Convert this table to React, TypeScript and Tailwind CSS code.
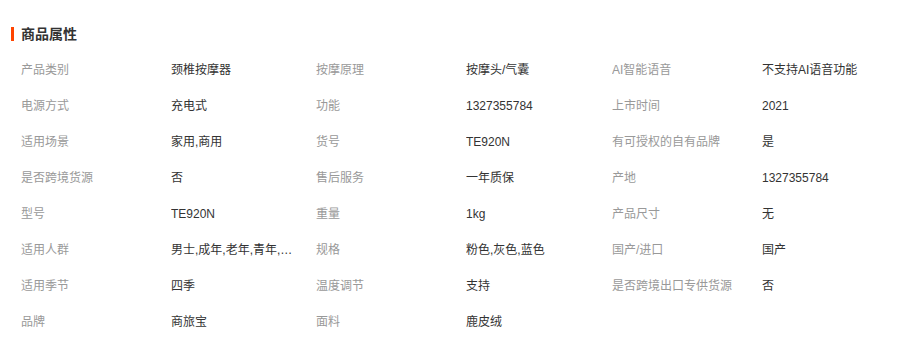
const attrs: [string, string][] = [
  ['产品类别', '颈椎按摩器'],
  ['按摩原理', '按摩头/气囊'],
  ['AI智能语音', '不支持AI语音功能'],
  ['电源方式', '充电式'],
  ['功能', '1327355784'],
  ['上市时间', '2021'],
  ['适用场景', '家用,商用'],
  ['货号', 'TE920N'],
  ['有可授权的自有品牌', '是'],
  ['是否跨境货源', '否'],
  ['售后服务', '一年质保'],
  ['产地', '1327355784'],
  ['型号', 'TE920N'],
  ['重量', '1kg'],
  ['产品尺寸', '无'],
  ['适用人群', '男士,成年,老年,青年,中年'],
  ['规格', '粉色,灰色,蓝色'],
  ['国产/进口', '国产'],
  ['适用季节', '四季'],
  ['温度调节', '支持'],
  ['是否跨境出口专供货源', '否'],
  ['品牌', '商旅宝'],
  ['面料', '鹿皮绒'],
];

export default function App() {
  return (
    <div
      className="w-[923px] h-[342px] bg-white pt-[24px] px-[11px] overflow-hidden"
      style={{ fontFamily: '"Liberation Sans", "Noto Sans CJK SC", sans-serif' }}
    >
      <div className="flex items-center h-[20px]">
        <div className="w-[3px] h-[14px] bg-[#ff4400]" />
        <div className="ml-[7px] text-[14px] leading-[20px] font-bold text-[#333]">商品属性</div>
      </div>
      <div className="mt-[8px] pl-[10px] grid grid-cols-[295px_296px_296px]">
        {attrs.map(([label, value], i) => (
          <div key={i} className="flex items-center h-[36px] text-[12px]">
            <div className="w-[150px] shrink-0 text-[#999] truncate">{label}</div>
            <div className="w-[122px] text-[#333] truncate" title={value}>{value}</div>
          </div>
        ))}
      </div>
    </div>
  );
}
